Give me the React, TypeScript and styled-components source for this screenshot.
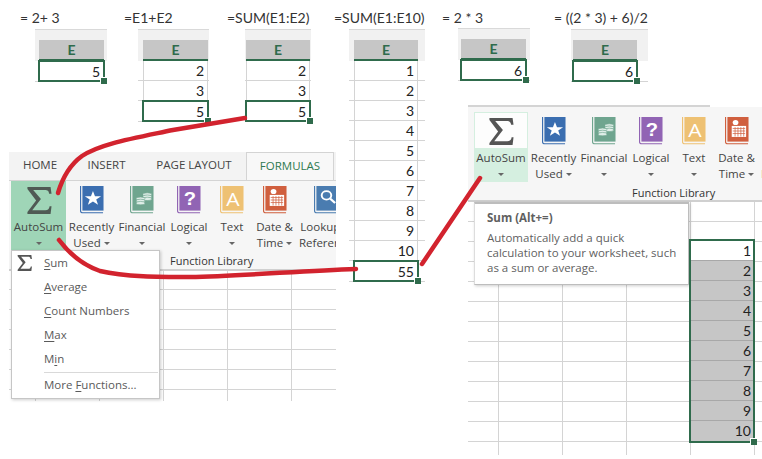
import React from 'react'
import styled, { createGlobalStyle } from 'styled-components'

const green = '#2f6b4c'

const Global = createGlobalStyle`
  html, body { margin: 0; padding: 0; background: #fff; }
  body { font-family: "Open Sans", "Liberation Sans", sans-serif; color: #444; }
`

// the picture is a collage of cut-outs, so the pieces sit on a free canvas
const Canvas = styled.div`
  position: relative;
  width: 762px;
  height: 459px;
  overflow: hidden;
  background: #fff;
`

const Formula = styled.div<{ $left: number }>`
  position: absolute;
  left: ${(p) => p.$left}px;
  top: 9px;
  font-family: Lato, "Open Sans", sans-serif;
  font-size: 14px;
  line-height: 18px;
  color: #333;
  white-space: nowrap;
`

const Sheet = styled.div<{ $left: number; $top: number; $width: number }>`
  position: absolute;
  left: ${(p) => p.$left}px;
  top: ${(p) => p.$top}px;
  width: ${(p) => p.$width}px;
`

const SheetBand = styled.div<{ $padLeft: number; $padRight: number }>`
  background: #f1f1f1;
  border-top: 1px solid #d9d9d9;
  padding: 10px ${(p) => p.$padRight}px 0 ${(p) => p.$padLeft}px;
`

const ColumnHead = styled.div`
  height: 19px;
  background: #c6c6c6;
  border-bottom: 2px solid ${green};
  display: flex;
  align-items: center;
  justify-content: center;
  font: bold 14px/19px Lato, sans-serif;
  color: ${green};
`

const SheetRow = styled.div<{ $padLeft: number; $padRight: number }>`
  padding: 0 ${(p) => p.$padRight}px 0 ${(p) => p.$padLeft}px;
  border-bottom: 1px solid #d4d4d4;
`

const Cell = styled.div<{ $picked?: boolean }>`
  position: relative;
  box-sizing: border-box;
  height: 19px;
  padding-right: 3px;
  border-left: ${(p) => (p.$picked ? `2px solid ${green}` : '1px solid #d4d4d4')};
  border-right: ${(p) => (p.$picked ? `2px solid ${green}` : '1px solid #d4d4d4')};
  ${(p) =>
    p.$picked
      ? `
    height: 22px;
    margin: -1px -1px -1px -1px;
    border-top: 2px solid ${green};
    border-bottom: 2px solid ${green};
    background: #fff;
  `
      : ''}
  font: 14px/20px Lato, sans-serif;
  color: #222;
  text-align: right;
`

const Handle = styled.span`
  position: absolute;
  right: -4px;
  bottom: -4px;
  width: 6px;
  height: 6px;
  background: ${green};
  border: 1px solid #fff;
  border-width: 1px 0 0 1px;
`

const Ribbon = styled.div<{ $left: number; $top: number; $width: number }>`
  position: absolute;
  left: ${(p) => p.$left}px;
  top: ${(p) => p.$top}px;
  width: ${(p) => p.$width}px;
`

const TabStrip = styled.div`
  display: flex;
  height: 28px;
  background: #f3f3f3;
  border-bottom: 1px solid #d4d4d4;
  box-sizing: content-box;
`

const Tab = styled.div<{ $width: number; $active?: boolean }>`
  width: ${(p) => p.$width}px;
  font-size: 11.5px;
  line-height: 26px;
  text-align: center;
  color: ${(p) => (p.$active ? '#2f7a50' : '#444')};
  ${(p) =>
    p.$active
      ? `
    height: 28px;
    background: #f8f8f8;
    border: 1px solid #d4d4d4;
    border-bottom: none;
    box-sizing: border-box;
  `
      : ''}
`

const RibbonEdge = styled.div`
  width: 242px;
  height: 2px;
  background: #d4d4d4;
`

const Shelf = styled.div<{ $height: number; $padLeft: number; $padTop: number }>`
  height: ${(p) => p.$height}px;
  padding: ${(p) => p.$padTop}px 0 0 ${(p) => p.$padLeft}px;
  box-sizing: border-box;
  background: #f6f6f6;
  border-bottom: 2px solid #d0d0d0;
  overflow: hidden;
  position: relative;
`

const Tools = styled.div`
  display: flex;
  align-items: flex-start;
`

const Tool = styled.div<{ $width: number; $tone?: 'strong' | 'soft' }>`
  flex: none;
  width: ${(p) => p.$width}px;
  height: 70px;
  box-sizing: border-box;
  display: flex;
  flex-direction: column;
  align-items: center;
  white-space: nowrap;
  font-size: 11.5px;
  line-height: 16px;
  color: #444;
  background: ${(p) => (p.$tone === 'strong' ? '#9fd5b7' : 'transparent')};
  ${(p) =>
    p.$tone === 'soft'
      ? `
    outline: 1px solid #d5efe0;
    outline-offset: -1px;
    background: linear-gradient(#fdfdfd 0 36px, #d5efe0 36px);
  `
      : ''}
`

const ToolGlyph = styled.div`
  height: 28px;
  margin: 5px 0;
  display: flex;
  align-items: center;
  justify-content: center;
`

const ToolLine = styled.div`
  height: 16px;
  display: flex;
  align-items: center;
  gap: 3px;
`

const Caret = styled.span`
  width: 0;
  height: 0;
  border-left: 3px solid transparent;
  border-right: 3px solid transparent;
  border-top: 3px solid #666;
`

const GroupName = styled.div<{ $left: number; $bottom: number }>`
  position: absolute;
  left: ${(p) => p.$left}px;
  bottom: ${(p) => p.$bottom}px;
  font-size: 11px;
  line-height: 14px;
  color: #333;
  white-space: nowrap;
`

const Grid = styled.div<{ $height: number; $x: number; $y: number }>`
  height: ${(p) => p.$height}px;
  background-image: linear-gradient(#d4d4d4 1px, transparent 1px), linear-gradient(90deg, #d4d4d4 1px, transparent 1px);
  background-size: 64px 20px;
  background-position: ${(p) => p.$x}px ${(p) => p.$y}px;
`

const Menu = styled.div`
  position: absolute;
  left: 11px;
  top: 250px;
  width: 149px;
  height: 149px;
  box-sizing: border-box;
  background: #fff;
  border: 1px solid #c6c6c6;
  box-shadow: 1px 1px 3px rgba(0, 0, 0, 0.2);
`

const MenuItem = styled.div`
  position: relative;
  height: 24px;
  padding-left: 32px;
  font-size: 11.5px;
  line-height: 24px;
  color: #5a5a5a;
  u { text-underline-offset: 2px; }
`

const MenuSigma = styled.span`
  position: absolute;
  left: 5px;
  top: 4px;
  display: flex;
`

const MenuRule = styled.div`
  height: 1px;
  margin: 1px 1px 0 32px;
  background: #d9d9d9;
`

const Tip = styled.div`
  position: absolute;
  left: 474px;
  top: 202px;
  width: 215px;
  height: 83px;
  box-sizing: border-box;
  padding: 6px 8px 6px 12px;
  background: #fff;
  border: 1px solid #bdbdbd;
  border-top-width: 2px;
  border-left-color: #ddd;
  box-shadow: 1px 1px 3px rgba(0, 0, 0, 0.2);
  font-size: 11.5px;
  line-height: 15px;
  color: #5f5f5f;
`

const TipTitle = styled.div`
  font-weight: 700;
  margin-bottom: 5px;
`

const Selection = styled.div`
  position: absolute;
  left: 689px;
  top: 239px;
  width: 66px;
  box-sizing: border-box;
  border: 2px solid ${green};
`

const SelectionRow = styled.div<{ $first?: boolean }>`
  height: 20px;
  box-sizing: border-box;
  padding: 0 2px;
  background: ${(p) => (p.$first ? '#fff' : '#c6c6c6')};
  border-bottom: 1px solid #a8a8a8;
  font: 14px/20px Lato, sans-serif;
  color: #222;
  text-align: right;
  &:last-of-type { border-bottom: none; }
`

const Strokes = styled.svg`
  position: absolute;
  left: 0;
  top: 0;
  pointer-events: none;
`

function Sigma({ width, height, color = '#555' }: { width: number; height: number; color?: string }) {
  return (
    <svg width={width} height={height} viewBox="0 0 26 28">
      <path d="M1 0H25L26 7H23.5C23 4 22 3.2 19 3.2H7L15 12.5L6 24H19.5C22.5 24 23.5 23 24 20H26L25 28H1V26L10 14L1 2Z" fill={color} />
    </svg>
  )
}

function Book({ color, children }: { color: string; children?: React.ReactNode }) {
  return (
    <svg width="24" height="28" viewBox="0 0 25 33" preserveAspectRatio="none">
      <path d="M0.6 0V29.5C0.6 31 1.6 31.6 3 31.6H24" fill="none" stroke={color} strokeWidth="1.2" />
      <rect x="2.5" y="0" width="22" height="29" fill={color} />
      {children}
    </svg>
  )
}

const icons: Record<string, React.ReactNode> = {
  star: (
    <Book color="#3b6eb0">
      <path d="M13.5 6L15.6 12.2H22L16.9 16L18.8 22.2L13.5 18.4L8.2 22.2L10.1 16L5 12.2H11.4Z" fill="#fff" />
    </Book>
  ),
  coins: (
    <Book color="#6fa58f">
      <g fill="#dfeee8" stroke="#6fa58f" strokeWidth="0.7">
        <ellipse cx="18" cy="10" rx="4.6" ry="2" />
        <ellipse cx="18" cy="12.6" rx="4.6" ry="2" />
        <ellipse cx="18" cy="15.2" rx="4.6" ry="2" />
        <ellipse cx="11" cy="15" rx="4.6" ry="2" />
        <ellipse cx="11" cy="17.6" rx="4.6" ry="2" />
        <ellipse cx="11" cy="20.2" rx="4.6" ry="2" />
      </g>
    </Book>
  ),
  help: (
    <Book color="#9164b4">
      <text x="13.5" y="22.5" textAnchor="middle" fontFamily="Liberation Sans, sans-serif" fontWeight="700" fontSize="21" fill="#fff">?</text>
    </Book>
  ),
  letter: (
    <Book color="#eec173">
      <text x="13.5" y="23" textAnchor="middle" fontFamily="Open Sans, sans-serif" fontSize="22" fill="#fff">A</text>
    </Book>
  ),
  calendar: (
    <Book color="#d05f3e">
      <circle cx="11" cy="6.5" r="3" fill="#fff" />
      <rect x="7" y="10.5" width="15" height="13" fill="#fff" />
      <path d="M8 13.5H21M8 16.5H21M8 19.5H21M10.5 12V23M13.5 12V23M16.5 12V23M19.5 12V23" stroke="#d05f3e" strokeWidth="0.8" />
    </Book>
  ),
  lookup: (
    <Book color="#4a7cb0">
      <circle cx="13" cy="11" r="5" fill="none" stroke="#fff" strokeWidth="2" />
      <path d="M17 15L22 20" stroke="#fff" strokeWidth="2.4" />
    </Book>
  ),
}

const sheets = [
  { formula: '= 2+ 3', textLeft: 20, left: 35, top: 29, width: 72, padLeft: 4, padRight: 3, rows: ['5'] },
  { formula: '=E1+E2', textLeft: 124, left: 138, top: 29, width: 71, padLeft: 5, padRight: 1, rows: ['2', '3', '5'] },
  { formula: '=SUM(E1:E2)', textLeft: 227, left: 245, top: 29, width: 66, padLeft: 1, padRight: 1, rows: ['2', '3', '5'] },
  {
    formula: '=SUM(E1:E10)',
    textLeft: 334,
    left: 349,
    top: 29,
    width: 76,
    padLeft: 5,
    padRight: 7,
    rows: ['1', '2', '3', '4', '5', '6', '7', '8', '9', '10', '55'],
  },
  { formula: '= 2 * 3', textLeft: 442, left: 458, top: 28, width: 72, padLeft: 3, padRight: 4, rows: ['6'] },
  { formula: '= ((2 * 3) + 6)/2', textLeft: 554, left: 571, top: 29, width: 77, padLeft: 2, padRight: 11, rows: ['6'] },
]

type ToolDef = { icon: string; lines: string[]; width: number; caretOn: number }

const tools: ToolDef[] = [
  { icon: 'star', lines: ['Recently', 'Used'], width: 51, caretOn: 1 },
  { icon: 'coins', lines: ['Financial', ''], width: 50, caretOn: 1 },
  { icon: 'help', lines: ['Logical', ''], width: 44, caretOn: 1 },
  { icon: 'letter', lines: ['Text', ''], width: 42, caretOn: 1 },
  { icon: 'calendar', lines: ['Date &', 'Time'], width: 43, caretOn: 1 },
  { icon: 'lookup', lines: ['Lookup &', 'Reference'], width: 60, caretOn: -1 },
]

function ToolSet({ autoWidth, tone }: { autoWidth: number; tone: 'strong' | 'soft' }) {
  return (
    <Tools>
      <Tool $width={autoWidth} $tone={tone}>
        <ToolGlyph>
          <Sigma width={26} height={27} color={tone === 'strong' ? '#4f5a54' : '#555'} />
        </ToolGlyph>
        <ToolLine>AutoSum</ToolLine>
        <ToolLine>
          <Caret />
        </ToolLine>
      </Tool>
      {tools.map((t) => (
        <Tool $width={t.width} key={t.icon}>
          <ToolGlyph>{icons[t.icon]}</ToolGlyph>
          {t.lines.map((line, i) => (
            <ToolLine key={i}>
              {line}
              {i === t.caretOn && <Caret />}
            </ToolLine>
          ))}
        </Tool>
      ))}
    </Tools>
  )
}

const menuItems: React.ReactNode[] = [
  <><u>S</u>um</>,
  <><u>A</u>verage</>,
  <><u>C</u>ount Numbers</>,
  <><u>M</u>ax</>,
  <>M<u>i</u>n</>,
]

export default function App() {
  return (
    <Canvas>
      <Global />
      {sheets.map((s) => (
        <React.Fragment key={s.formula}>
          <Formula $left={s.textLeft}>{s.formula}</Formula>
          <Sheet $left={s.left} $top={s.top} $width={s.width}>
            <SheetBand $padLeft={s.padLeft} $padRight={s.padRight}>
              <ColumnHead>E</ColumnHead>
            </SheetBand>
            {s.rows.map((value, i) => {
              const picked = i === s.rows.length - 1
              return (
                <SheetRow key={i} $padLeft={s.padLeft} $padRight={s.padRight}>
                  <Cell $picked={picked}>
                    {value}
                    {picked && <Handle />}
                  </Cell>
                </SheetRow>
              )
            })}
          </Sheet>
        </React.Fragment>
      ))}

      <Ribbon $left={9} $top={152} $width={327}>
        <TabStrip>
          <Tab $width={62}>HOME</Tab>
          <Tab $width={71}>INSERT</Tab>
          <Tab $width={104}>PAGE LAYOUT</Tab>
          <Tab $width={88} $active>FORMULAS</Tab>
        </TabStrip>
        <Shelf $height={90} $padLeft={2} $padTop={0}>
          <ToolSet autoWidth={55} tone="strong" />
          <GroupName $left={161} $bottom={1}>Function Library</GroupName>
        </Shelf>
        <Grid $height={130} $x={26} $y={-2} />
      </Ribbon>

      <Menu>
        {menuItems.map((item, i) => (
          <MenuItem key={i}>
            {i === 0 && (
              <MenuSigma>
                <Sigma width={15} height={16} />
              </MenuSigma>
            )}
            {item}
          </MenuItem>
        ))}
        <MenuRule />
        <MenuItem>More <u>F</u>unctions...</MenuItem>
      </Menu>

      <Ribbon $left={468} $top={105} $width={294}>
        <RibbonEdge />
        <Shelf $height={95} $padLeft={6} $padTop={5}>
          <ToolSet autoWidth={54} tone="soft" />
          <GroupName $left={164} $bottom={0}>Function Library</GroupName>
        </Shelf>
        <Grid $height={253} $x={30} $y={-1} />
      </Ribbon>

      <Tip>
        <TipTitle>Sum (Alt+=)</TipTitle>
        Automatically add a quick calculation to your worksheet, such as a sum or average.
      </Tip>

      <Selection>
        {['1', '2', '3', '4', '5', '6', '7', '8', '9', '10'].map((n, i) => (
          <SelectionRow key={n} $first={i === 0}>{n}</SelectionRow>
        ))}
        <Handle />
      </Selection>

      <Strokes width="762" height="459" viewBox="0 0 762 459">
        <g fill="none" stroke="#d2232e" strokeWidth="4.5" strokeLinecap="round">
          <path d="M58 193C63 176 71 164 82 156C100 144 130 139 173 130L245 118" />
          <path d="M59 240C68 252 80 264 100 271C125 277 160 277 190 277C240 276 300 271 356 269" />
          <path d="M422 264L480 178" />
        </g>
      </Strokes>
    </Canvas>
  )
}
